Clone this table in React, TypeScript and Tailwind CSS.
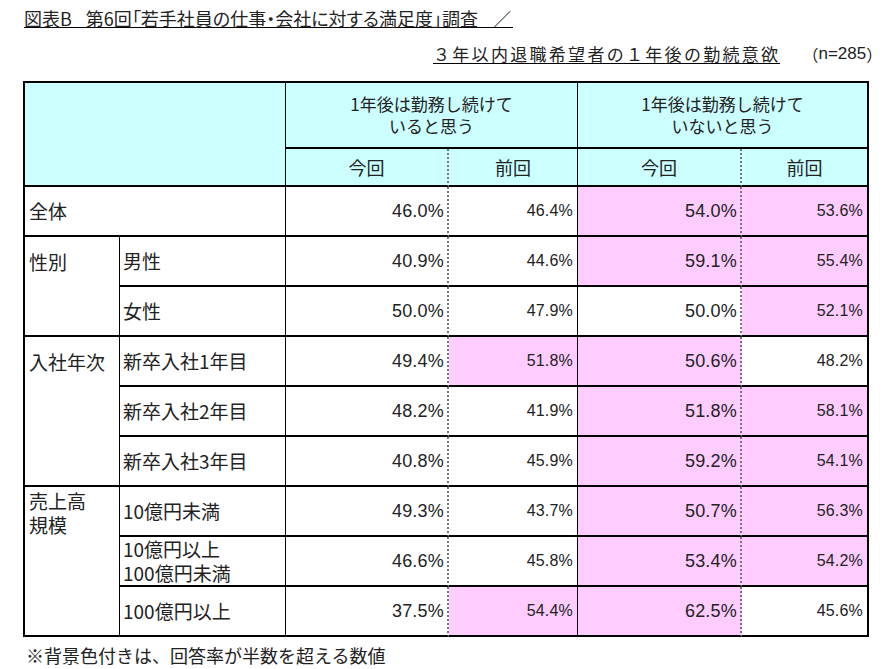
import React from "react";

type Val = [string, boolean];
type Row = { g?: string; gSpan?: number; gLines?: string[]; sub?: string[]; full?: boolean; vals: Val[] };

const rows: Row[] = [
  { g: "全体", full: true, vals: [["46.0%", false], ["46.4%", false], ["54.0%", true], ["53.6%", true]] },
  { g: "性別", gSpan: 2, gLines: ["性別"], sub: ["男性"], vals: [["40.9%", false], ["44.6%", false], ["59.1%", true], ["55.4%", true]] },
  { sub: ["女性"], vals: [["50.0%", false], ["47.9%", false], ["50.0%", false], ["52.1%", true]] },
  { g: "入社年次", gSpan: 3, gLines: ["入社年次"], sub: ["新卒入社1年目"], vals: [["49.4%", false], ["51.8%", true], ["50.6%", true], ["48.2%", false]] },
  { sub: ["新卒入社2年目"], vals: [["48.2%", false], ["41.9%", false], ["51.8%", true], ["58.1%", true]] },
  { sub: ["新卒入社3年目"], vals: [["40.8%", false], ["45.9%", false], ["59.2%", true], ["54.1%", true]] },
  { g: "売上高規模", gSpan: 3, gLines: ["売上高", "規模"], sub: ["10億円未満"], vals: [["49.3%", false], ["43.7%", false], ["50.7%", true], ["56.3%", true]] },
  { sub: ["10億円以上", "100億円未満"], vals: [["46.6%", false], ["45.8%", false], ["53.4%", true], ["54.2%", true]] },
  { sub: ["100億円以上"], vals: [["37.5%", false], ["54.4%", true], ["62.5%", true], ["45.6%", false]] },
];

const solidR = "border-b-2 border-b-black border-r border-r-black";
const dotR = "border-b-2 border-b-black border-r-2 border-r-[#777] [border-right-style:dotted]";
const lastR = "border-b-2 border-b-black border-r-2 border-r-black";
const NUM = "font-['Liberation_Sans_Narrow','Liberation_Sans',sans-serif]";

function ValueCell({ v, idx }: { v: Val; idx: number }) {
  const border = idx === 0 || idx === 2 ? dotR : idx === 1 ? solidR : lastR;
  const size = idx === 0 || idx === 2 ? "text-[18px] pr-[3px]" : "text-[16px] pr-[4px]";
  const bg = v[1] ? "bg-[#ffccff]" : "bg-white";
  return (
    <div className={`${border} ${bg} flex items-center justify-end`}>
      <span className={`${NUM} ${size} leading-none tracking-[0.2px]`}>{v[0]}</span>
    </div>
  );
}

export default function App() {
  return (
    <div className="w-[893px] h-[669px] bg-white text-[#222] font-['Noto_Sans_CJK_JP',sans-serif] overflow-hidden flex flex-col">
      <div className="flex pl-[24px] pt-[9px]">
        <span className="flex items-end border-b border-b-black text-[18px] leading-[18px] pr-[2px] [font-feature-settings:'palt']">
          <span>図表B</span>
          <span className="inline-block w-[14px]" />
          <span>第6回「若手社員の仕事・会社に対する満足度」調査</span>
          <span className="inline-block w-[15px]" />
          <span>／</span>
        </span>
      </div>
      <div className="flex items-end pl-[433px] mt-[17px] h-[19px]">
        <span className="border-b border-b-black text-[17px] leading-[18px] tracking-[2.3px]">
          ３年以内退職希望者の１年後の勤続意欲
        </span>
        <span className="ml-[22px] text-[16px] leading-[18px] mb-[1px] flex">
          <span>（</span>
          <span className={NUM + " text-[17px]"}>n=285</span>
          <span>）</span>
        </span>
      </div>
      <div className="ml-[23px] mt-[17px] w-[846px] grid grid-cols-[95px_166px_163px_129px_164px_127px] grid-rows-[66px_38px_repeat(9,50px)] border-t-2 border-l-2 border-black">
        <div className={`col-span-2 row-span-2 bg-[#ccffff] ${solidR}`} />
        <div className={`col-span-2 bg-[#ccffff] ${solidR} flex flex-col items-center justify-center text-[17px] leading-[22px]`}>
          <span>1年後は勤務し続けて</span>
          <span>いると思う</span>
        </div>
        <div className={`col-span-2 bg-[#ccffff] ${lastR} flex flex-col items-center justify-center text-[17px] leading-[22px]`}>
          <span>1年後は勤務し続けて</span>
          <span>いないと思う</span>
        </div>
        {["今回", "前回", "今回", "前回"].map((t, i) => (
          <div
            key={i}
            className={`bg-[#ccffff] ${i === 0 || i === 2 ? dotR : i === 1 ? solidR : lastR} flex items-center justify-center text-[18px]`}
          >
            {t}
          </div>
        ))}
        {rows.map((r, ri) => (
          <React.Fragment key={ri}>
            {r.full && (
              <div className={`col-span-2 ${solidR} flex items-center pl-[4px] text-[19px]`}>{r.g}</div>
            )}
            {r.gSpan && (
              <div
                className={`${r.gSpan === 2 ? "row-span-2" : "row-span-3"} ${solidR} flex flex-col pl-[4px] text-[19px] ${
                  r.gLines && r.gLines.length > 1 ? "pt-[2px] leading-[24px]" : "pt-[13px] leading-[24px]"
                }`}
              >
                {r.gLines!.map((l, li) => (
                  <span key={li}>{l}</span>
                ))}
              </div>
            )}
            {r.sub && (
              <div className={`${solidR} flex flex-col justify-center pl-[3px] text-[19px] leading-[24px]`}>
                {r.sub.map((s, si) => (
                  <span key={si}>{s}</span>
                ))}
              </div>
            )}
            {r.vals.map((v, vi) => (
              <ValueCell key={vi} v={v} idx={vi} />
            ))}
          </React.Fragment>
        ))}
      </div>
      <div className="flex pl-[26px] pt-[6px] text-[18px] leading-[24px]">※背景色付きは、回答率が半数を超える数値</div>
    </div>
  );
}
